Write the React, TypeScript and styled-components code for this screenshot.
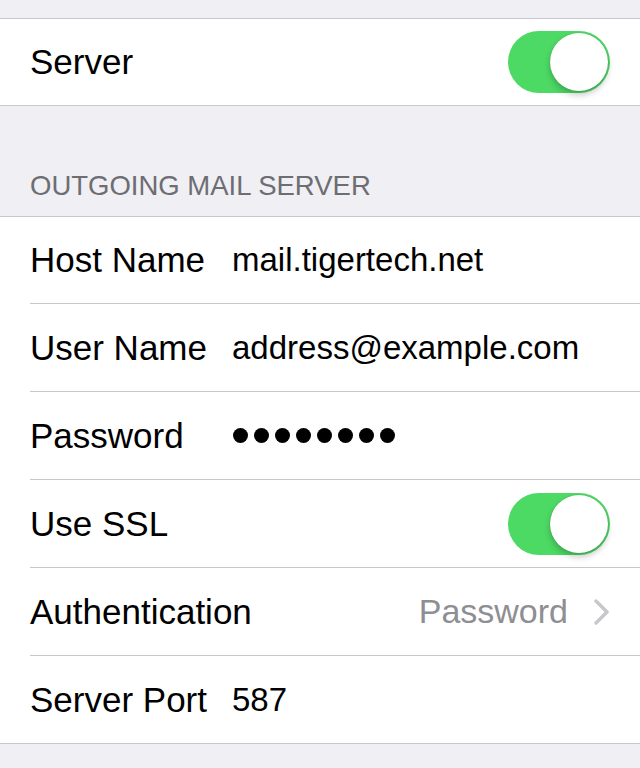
import React from "react";
import styled, { createGlobalStyle } from "styled-components";

const Global = createGlobalStyle`
  html, body {
    margin: 0;
    padding: 0;
    background: #efeff4;
    font-family: "Liberation Sans", Arial, sans-serif;
    -webkit-font-smoothing: antialiased;
  }
`;

const Page = styled.div`
  width: 640px;
  min-height: 768px;
  background: #efeff4;
  padding-top: 18px;
  box-sizing: border-box;
`;

const Group = styled.div`
  background: #ffffff;
  border-top: 1px solid #c8c7cc;
  border-bottom: 1px solid #c8c7cc;
`;

const Row = styled.div<{ $last?: boolean; $h?: number }>`
  height: ${(p) => p.$h ?? 87}px;
  margin-left: 30px;
  padding-right: 30px;
  display: flex;
  align-items: center;
  border-bottom: ${(p) => (p.$last ? "none" : "1px solid #c8c7cc")};
`;

const Label = styled.div<{ $fixed?: boolean }>`
  font-size: 35px;
  color: #000;
  width: ${(p) => (p.$fixed ? "202px" : "auto")};
  flex: ${(p) => (p.$fixed ? "0 0 202px" : "1 1 auto")};
  white-space: nowrap;
`;

const Value = styled.div`
  font-size: 33px;
  color: #000;
  white-space: nowrap;
`;

const Detail = styled.div`
  font-size: 34px;
  color: #8e8e93;
  white-space: nowrap;
  margin-right: 26px;
`;

const SectionHeader = styled.div`
  height: 110px;
  padding: 0 30px 14px;
  box-sizing: border-box;
  display: flex;
  align-items: flex-end;
  font-size: 27.5px;
  color: #6d6d72;
`;

const Switch = styled.div`
  margin-left: auto;
  width: 102px;
  height: 62px;
  border-radius: 31px;
  background: #4cd964;
  position: relative;
  flex: 0 0 auto;
`;

const Knob = styled.div`
  position: absolute;
  top: 2px;
  right: 2px;
  width: 58px;
  height: 58px;
  border-radius: 50%;
  background: #ffffff;
  box-shadow: 0 4px 6px rgba(0, 0, 0, 0.22), 0 0 1px rgba(0, 0, 0, 0.25);
`;

const Dots = styled.div`
  display: flex;
  gap: 6px;
  padding-left: 1px;
`;

const Dot = styled.span`
  width: 15px;
  height: 15px;
  border-radius: 50%;
  background: #000;
`;

const Chevron = styled.svg`
  margin-left: auto;
  flex: 0 0 auto;
`;

const Toggle = () => (
  <Switch>
    <Knob />
  </Switch>
);

export default function App() {
  return (
    <Page>
      <Global />
      <Group>
        <Row $last $h={86}>
          <Label>Server</Label>
          <Toggle />
        </Row>
      </Group>
      <SectionHeader>OUTGOING MAIL SERVER</SectionHeader>
      <Group>
        <Row $h={86}>
          <Label $fixed>Host Name</Label>
          <Value>mail.tigertech.net</Value>
        </Row>
        <Row>
          <Label $fixed>User Name</Label>
          <Value>address@example.com</Value>
        </Row>
        <Row>
          <Label $fixed>Password</Label>
          <Dots>
            {Array.from({ length: 8 }).map((_, i) => (
              <Dot key={i} />
            ))}
          </Dots>
        </Row>
        <Row>
          <Label>Use SSL</Label>
          <Toggle />
        </Row>
        <Row>
          <Label>Authentication</Label>
          <Detail>Password</Detail>
          <Chevron width="16" height="26" viewBox="0 0 16 26">
            <polyline
              points="2,2 13,13 2,24"
              fill="none"
              stroke="#c7c7cc"
              strokeWidth="3.5"
              strokeLinecap="round"
              strokeLinejoin="round"
            />
          </Chevron>
        </Row>
        <Row $last>
          <Label $fixed>Server Port</Label>
          <Value>587</Value>
        </Row>
      </Group>
    </Page>
  );
}
